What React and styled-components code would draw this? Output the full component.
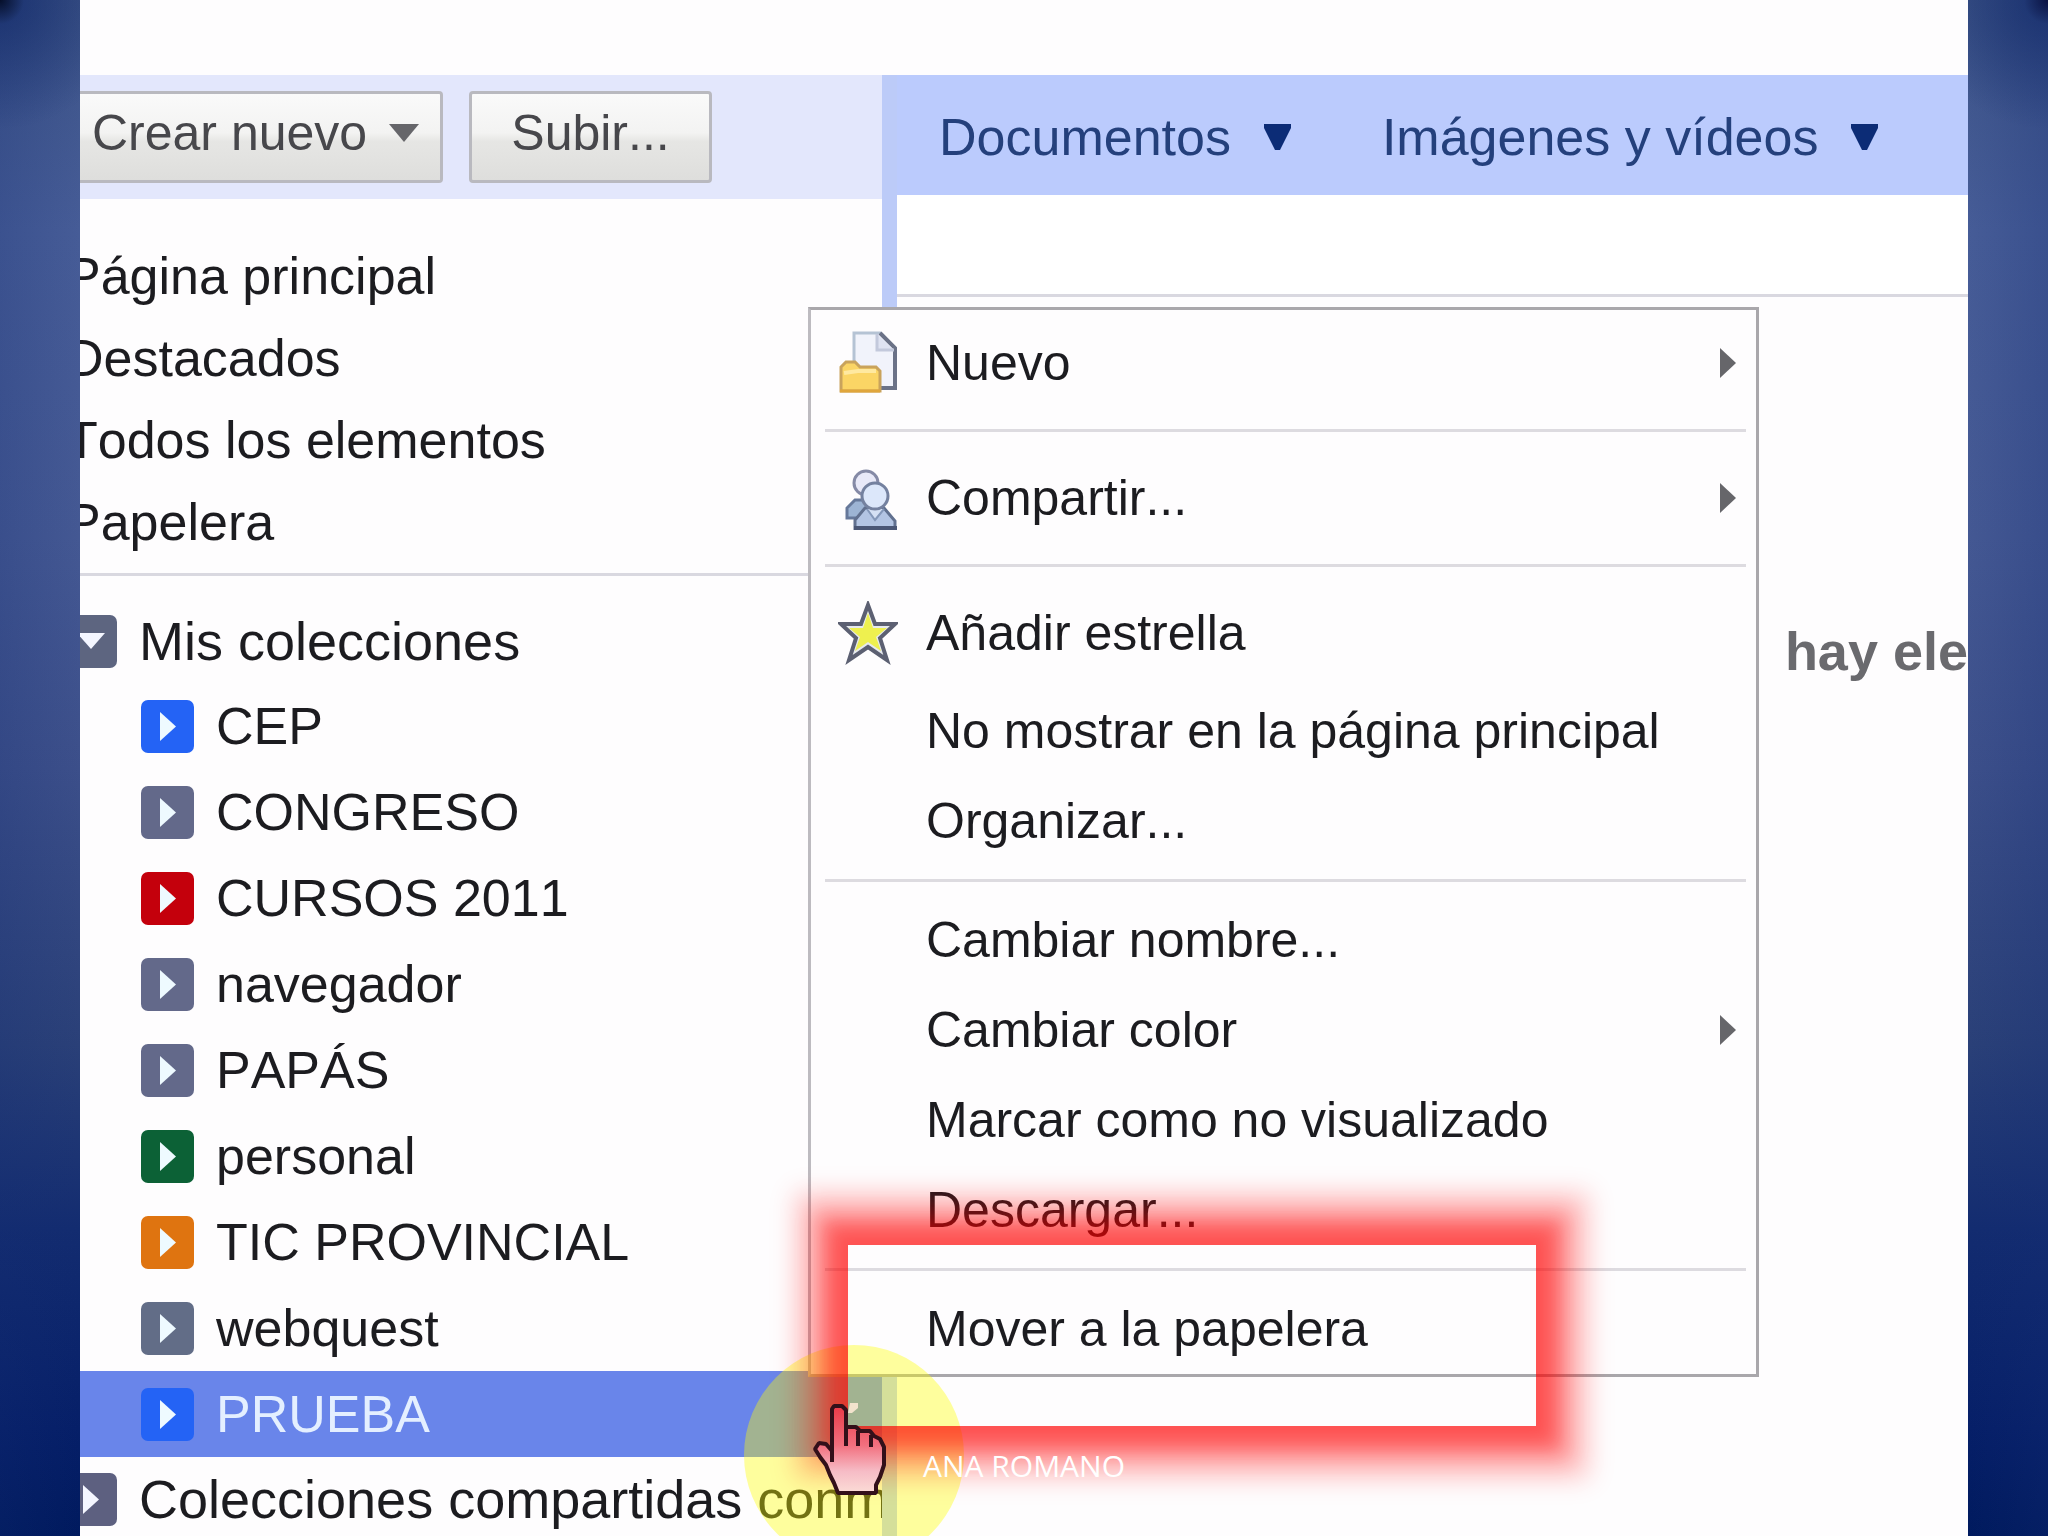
import React from 'react';
import styled, { createGlobalStyle } from 'styled-components';

const GlobalStyle = createGlobalStyle`
  * { box-sizing: border-box; }
  body {
    margin: 0;
    font-family: "Liberation Sans", Arial, sans-serif;
    font-kerning: none;
    color: #1c1c20;
  }
  button { font-family: inherit; font-kerning: inherit; color: inherit; }
`;

const Slide = styled.div`
  position: relative;
  display: flex;
  height: 100vh;
  padding: 0 80px;
  overflow: hidden;
  background:
    radial-gradient(circle at 0 0, rgba(0, 8, 32, 0.9), rgba(10, 34, 100, 0.5) 24px, transparent 130px),
    radial-gradient(circle at 100% 0, rgba(0, 4, 50, 0.8), rgba(10, 34, 100, 0.5) 24px, transparent 130px),
    linear-gradient(90deg, rgba(20, 45, 115, 0.22), transparent 80px, transparent calc(100% - 80px), rgba(20, 45, 115, 0.25)),
    linear-gradient(#3d5488, #465c97 15%, #445893 35%, #3c4f8a 50%, #2a4078 68%, #132c70 80%, #061f68 93%, #001a5e);
`;

const Screen = styled.div`
  position: relative;
  flex: 1;
  min-width: 0;
  display: flex;
  flex-direction: column;
  padding-top: 75px;
  background: #fefdfe;
  overflow: hidden;
`;

const Columns = styled.div`
  flex: 1;
  display: grid;
  grid-template-columns: 802px 1fr;
`;

const Sidebar = styled.aside`
  min-width: 0;
  overflow: hidden;
  white-space: nowrap;
`;

const Toolbar = styled.div`
  display: flex;
  gap: 26px;
  padding: 16px 0;
  background: #e3e7fc;
`;

const ToolButton = styled.button`
  display: flex;
  align-items: center;
  justify-content: ${p => (p.$cut ? 'flex-start' : 'center')};
  gap: 22px;
  width: ${p => (p.$cut ? 363 : 243)}px;
  height: 92px;
  padding: 0 12px 8px;
  border: 3px solid #b9b9bf;
  border-left-width: ${p => (p.$cut ? 0 : 3)}px;
  border-radius: ${p => (p.$cut ? '0 4px 4px 0' : '4px')};
  background: linear-gradient(#fafafa, #f3f3f2 45%, #e6e6e4 55%, #dededc);
  color: #47474b;
  font-size: 50px;
`;

const Nav = styled.nav`
  display: flex;
  flex-direction: column;
  margin-left: -14px;
  padding: 36px 0 10px;
`;

const NavLink = styled.a`
  font-size: 52px;
  line-height: 82px;
  color: inherit;
  text-decoration: none;
`;

const Rule = styled.hr`
  height: 3px;
  margin: 0;
  border: 0;
  background: #d9d8e0;
`;

const Tree = styled.div`
  display: flex;
  flex-direction: column;
  margin-left: -16px;
  padding-top: 23px;
`;

const TreeRow = styled.a`
  display: flex;
  flex-shrink: 0;
  align-items: center;
  gap: 22px;
  height: ${p => (p.$child ? 86 : 84)}px;
  padding-left: ${p => (p.$child ? 77 : 0)}px;
  font-size: ${p => (p.$child ? 52 : 54)}px;
  color: ${p => (p.$selected ? '#e4efff' : 'inherit')};
  background: ${p => (p.$selected ? '#6985ea' : 'transparent')};
  text-decoration: none;
`;

const Toggle = styled.span`
  flex: none;
  display: grid;
  place-items: center;
  width: 53px;
  height: 53px;
  border-radius: 7px;
  background: ${p => p.$color};
`;

const Main = styled.main`
  min-width: 0;
  border-left: 15px solid #bccbf8;
  overflow: hidden;
  white-space: nowrap;
`;

const FilterBar = styled.div`
  display: flex;
  gap: 91px;
  height: 120px;
  padding: 3px 0 0 42px;
  background: #bbcbfd;
`;

const FilterButton = styled.button`
  display: flex;
  flex: none;
  align-items: center;
  gap: 33px;
  padding: 0;
  border: 0;
  background: none;
  color: #24407c;
  font-size: 52px;
`;

const Heading = styled.div`
  height: 99px;
  background: #fff;
`;

const EmptyNote = styled.p`
  margin: 0;
  padding-top: 324px;
  color: #6a6a6e;
  font-size: 54px;
  font-weight: bold;
  line-height: 60px;
  text-align: right;
`;

const Menu = styled.div`
  position: absolute;
  top: 307px;
  left: 728px;
  width: 951px;
  border: 3px solid #a9a7ab;
  border-left-color: #bdbbc0;
  background: #fefdfe;
  white-space: nowrap;
`;

const MenuItem = styled.button`
  display: grid;
  grid-template-columns: 60px 1fr auto;
  align-items: center;
  gap: 28px;
  width: 100%;
  height: ${p => (p.$tall ? 106 : 90)}px;
  padding: 0 20px 0 27px;
  border: 0;
  background: none;
  font-size: 50px;
  text-align: left;
`;

const MenuIcon = styled.span`
  display: flex;
`;

const Separator = styled.hr`
  height: 3px;
  margin: 13px 10px 13px 14px;
  border: 0;
  background: #dddbe0;
`;

const ClickSpot = styled.div`
  position: absolute;
  top: 1345px;
  left: 664px;
  width: 220px;
  height: 220px;
  border-radius: 50%;
  background: rgba(255, 255, 0, 0.38);
`;

const Highlight = styled.div`
  position: absolute;
  top: 1245px;
  left: 768px;
  width: 688px;
  height: 181px;
  box-shadow:
    0 0 16px 12px rgba(255, 0, 0, 0.2),
    0 0 16px 22px rgba(255, 0, 0, 0.26),
    0 0 20px 32px rgba(255, 0, 0, 0.24),
    0 0 24px 44px rgba(255, 0, 0, 0.18),
    0 0 24px 56px rgba(255, 0, 0, 0.12);
`;

const Pointer = styled.div`
  position: absolute;
  top: 1400px;
  left: 732px;
  line-height: 0;
`;

const Footer = styled.footer`
  position: absolute;
  right: 0;
  bottom: 50px;
  left: 0;
  color: #fff;
  font-family: "Open Sans", "Noto Sans", sans-serif;
  font-size: 30px;
  line-height: 40px;
  text-align: center;
`;

const Triangle = ({ width, height, color, dir }) => (
  <svg width={width} height={height} viewBox="0 0 10 10" preserveAspectRatio="none" aria-hidden="true">
    <path d={dir === 'down' ? 'M0 0H10L5 10Z' : 'M0 0L10 5L0 10Z'} fill={color} />
  </svg>
);

const FilterArrow = () => (
  <svg width="27" height="26" viewBox="0 0 27 26" aria-hidden="true">
    <path d="M0 0H27V4L16 26H11L0 4Z" fill="#0c2c76" />
  </svg>
);

const NewIcon = () => (
  <svg width="60" height="64" viewBox="0 0 60 64" aria-hidden="true">
    <path d="M16 2H43L58 17V57H16Z" fill="#f1f3fb" />
    <path d="M16 32V2H43" fill="none" stroke="#b5c3d4" strokeWidth="3" />
    <path d="M42 2L57 17V57H40" fill="none" stroke="#6b7287" strokeWidth="4" />
    <path d="M39 3V19H56" fill="#dfe3f2" stroke="#c3c9dc" strokeWidth="3" />
    <path d="M3 36L8 31H17L22 36H38L42 40V60H3Z" fill="#fbd565" stroke="#c9a35c" strokeWidth="3" />
    <path d="M6 42L20 40H38" fill="none" stroke="#ffe9a0" strokeWidth="4" />
    <path d="M2 60H42" stroke="#e0a63c" strokeWidth="3" />
  </svg>
);

const ShareIcon = () => (
  <svg width="60" height="64" viewBox="0 0 60 64" aria-hidden="true">
    <path d="M9 52V42L17 34H34L42 44V52Z" fill="#9db4d4" stroke="#66789a" strokeWidth="3" />
    <circle cx="28" cy="17" r="12" fill="#e8e9f8" stroke="#858aa6" strokeWidth="3" />
    <path d="M17 64V54L27 42H46L57 55V64Z" fill="#b3c4e3" stroke="#61708f" strokeWidth="3" />
    <path d="M29 43L37 54L46 43" fill="#d5e0f4" stroke="#8497b9" strokeWidth="2" />
    <circle cx="37" cy="30" r="13" fill="#dce7fa" stroke="#74819f" strokeWidth="3" />
    <path d="M16 62H59" stroke="#4a5675" strokeWidth="4" />
  </svg>
);

const StarIcon = () => (
  <svg width="60" height="64" viewBox="0 0 60 64" aria-hidden="true">
    <path d="M30 4L37 23H57L42 37L49 59L30 46L11 59L18 37L3 23H23Z" fill="#e6e9ee" stroke="#5c6072" strokeWidth="4" />
    <path d="M30 12L35 27H49L38 36L43 50L30 41L17 50L22 36L11 27H25Z" fill="#eef04f" />
  </svg>
);

const HandCursor = () => (
  <svg width="76" height="98" viewBox="0 0 76 98" aria-hidden="true">
    <defs>
      <linearGradient id="palm" x1="0" y1="0" x2="0" y2="1">
        <stop offset="0" stopColor="#ea3a48" />
        <stop offset="0.45" stopColor="#f26f7e" />
        <stop offset="0.75" stopColor="#f6bcc6" />
        <stop offset="1" stopColor="#fbdcd6" />
      </linearGradient>
    </defs>
    <path d="M38 3H46V8L40 13H36Z" fill="#f3e3cd" />
    <path
      d="M22 6H30L34 10V27H44L48 31H58L62 36L68 39L72 47V65L68 77L64 85V93H26L22 83L18 75L14 65L8 57L3 49L7 43L14 44L20 51V9Z"
      fill="url(#palm)" stroke="#33101a" strokeWidth="4" strokeLinejoin="bevel"
    />
    <path d="M34 25V46M46 31V46M59 35V47M20 49V62" fill="none" stroke="#33101a" strokeWidth="4" />
  </svg>
);

const collections = [
  ['CEP', '#2463f5'],
  ['CONGRESO', '#63698a'],
  ['CURSOS 2011', '#c4000c'],
  ['navegador', '#63698a'],
  ['PAPÁS', '#63698a'],
  ['personal', '#0c6136'],
  ['TIC PROVINCIAL', '#df7410'],
  ['webquest', '#626d87'],
  ['PRUEBA', '#2463f5'],
];

const menuGroups = [
  [{ label: 'Nuevo', icon: <NewIcon />, sub: true }],
  [{ label: 'Compartir...', icon: <ShareIcon />, sub: true }],
  [
    { label: 'Añadir estrella', icon: <StarIcon /> },
    { label: 'No mostrar en la página principal' },
    { label: 'Organizar...' },
  ],
  [
    { label: 'Cambiar nombre...' },
    { label: 'Cambiar color', sub: true },
    { label: 'Marcar como no visualizado' },
    { label: 'Descargar...' },
  ],
  [{ label: 'Mover a la papelera' }],
];

export default function App() {
  return (
    <>
      <GlobalStyle />
      <Slide>
        <Screen>
          <Columns>
            <Sidebar>
              <Toolbar>
                <ToolButton $cut>
                  Crear nuevo
                  <Triangle dir="down" width={30} height={18} color="#66666a" />
                </ToolButton>
                <ToolButton>Subir...</ToolButton>
              </Toolbar>
              <Nav>
                {['Página principal', 'Destacados', 'Todos los elementos', 'Papelera'].map(t => (
                  <NavLink key={t} href="#">{t}</NavLink>
                ))}
              </Nav>
              <Rule />
              <Tree>
                <TreeRow href="#">
                  <Toggle $color="#5d6580">
                    <Triangle dir="down" width={28} height={16} color="#f4f6ff" />
                  </Toggle>
                  Mis colecciones
                </TreeRow>
                {collections.map(([name, color]) => (
                  <TreeRow key={name} href="#" $child $selected={name === 'PRUEBA'}>
                    <Toggle $color={color}>
                      <Triangle width={16} height={29} color="#eefaff" />
                    </Toggle>
                    {name}
                  </TreeRow>
                ))}
                <TreeRow href="#">
                  <Toggle $color="#5d6080">
                    <Triangle width={16} height={29} color="#f4f6ff" />
                  </Toggle>
                  Colecciones compartidas conm
                </TreeRow>
              </Tree>
            </Sidebar>
            <Main>
              <FilterBar>
                <FilterButton>Documentos<FilterArrow /></FilterButton>
                <FilterButton>Imágenes y vídeos<FilterArrow /></FilterButton>
              </FilterBar>
              <Heading />
              <Rule />
              <EmptyNote>hay ele</EmptyNote>
            </Main>
          </Columns>
          <Menu role="menu">
            {menuGroups.map((group, i) => (
              <React.Fragment key={i}>
                {i > 0 && <Separator />}
                {group.map(item => (
                  <MenuItem key={item.label} role="menuitem" $tall={Boolean(item.icon)}>
                    <MenuIcon>{item.icon}</MenuIcon>
                    <span>{item.label}</span>
                    {item.sub && <Triangle width={16} height={30} color="#66666a" />}
                  </MenuItem>
                ))}
              </React.Fragment>
            ))}
          </Menu>
          <ClickSpot />
          <Highlight />
          <Pointer><HandCursor /></Pointer>
        </Screen>
        <Footer>ANA ROMANO</Footer>
      </Slide>
    </>
  );
}
